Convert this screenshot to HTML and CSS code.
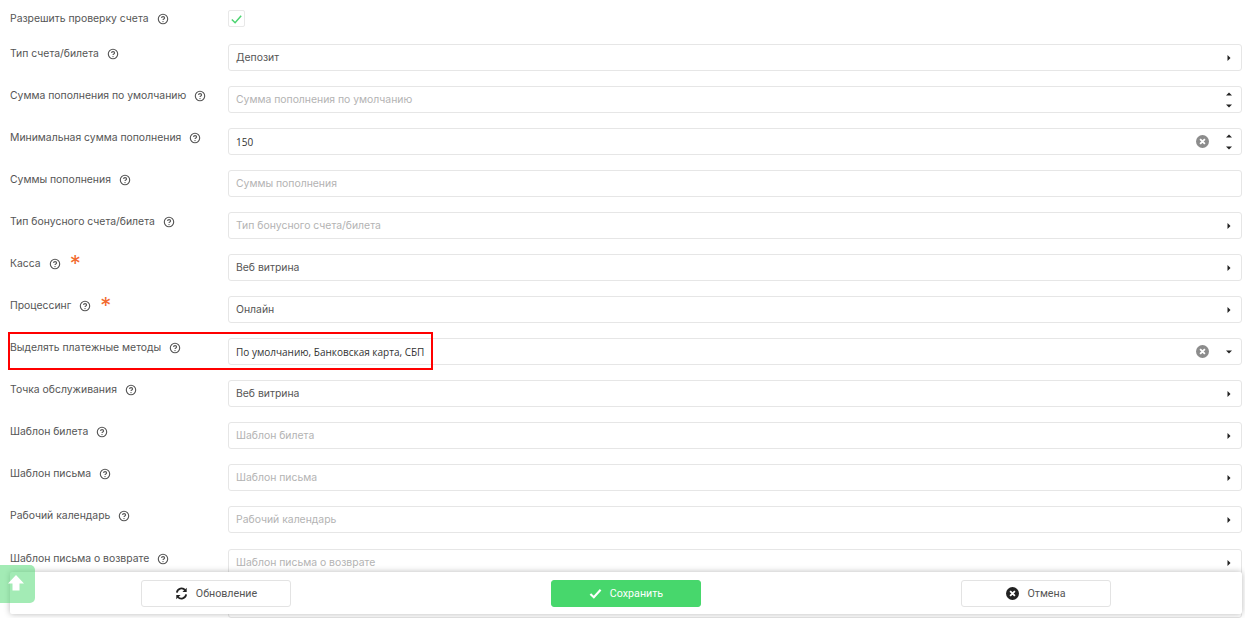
FILE: index.html
```html
<!DOCTYPE html>
<html lang="ru">
<head>
<meta charset="utf-8">
<title>Настройки</title>
<link rel="stylesheet" href="styles.css">
</head>
<body>
<svg class="defs" width="0" height="0" aria-hidden="true">
  <symbol id="q" viewBox="0 0 12 12">
    <circle cx="6" cy="6" r="4.7" fill="none" stroke="currentColor" stroke-width="1.1"/>
    <path d="M4.5 4.9C4.6 3.2 7.6 3.2 7.6 4.9C7.6 6 6 6 6 7.1" fill="none" stroke="currentColor" stroke-width="1.1"/>
    <circle cx="6" cy="8.6" r=".7" fill="currentColor"/>
  </symbol>
  <symbol id="x" viewBox="0 0 12 12">
    <circle cx="6" cy="6" r="6" fill="currentColor"/>
    <path d="M3.8 3.8L8.2 8.2M8.2 3.8L3.8 8.2" stroke="#fff" stroke-width="1.7"/>
  </symbol>
  <symbol id="r" viewBox="0 0 6 8"><path d="M1.5 1L4.5 4L1.5 7Z" fill="currentColor"/></symbol>
  <symbol id="d" viewBox="0 0 8 6"><path d="M1 1.5H7L4 4.5Z" fill="currentColor"/></symbol>
  <symbol id="u" viewBox="0 0 8 6"><path d="M1 4.5H7L4 1.5Z" fill="currentColor"/></symbol>
</svg>
<main class="form">
  <div class="row row-check">
    <div class="label"><span>Разрешить проверку счета</span><svg class="help"><use href="#q"/></svg></div>
    <div class="check"><svg viewBox="0 0 16 16" width="16" height="16"><path d="M3 8.5L6.5 12L13 4.5" fill="none" stroke="#4cd471" stroke-width="1.6"/></svg></div>
  </div>
  <div class="row">
    <div class="label"><span>Тип счета/билета</span><svg class="help"><use href="#q"/></svg></div>
    <div class="field"><span class="value">Депозит</span><svg class="arrow"><use href="#r"/></svg></div>
  </div>
  <div class="row">
    <div class="label"><span>Сумма пополнения по умолчанию</span><svg class="help"><use href="#q"/></svg></div>
    <div class="field"><span class="ph">Сумма пополнения по умолчанию</span><div class="spin"><svg><use href="#u"/></svg><svg><use href="#d"/></svg></div></div>
  </div>
  <div class="row">
    <div class="label"><span>Минимальная сумма пополнения</span><svg class="help"><use href="#q"/></svg></div>
    <div class="field"><span class="value dark">150</span><svg class="clear"><use href="#x"/></svg><div class="spin"><svg><use href="#u"/></svg><svg><use href="#d"/></svg></div></div>
  </div>
  <div class="row">
    <div class="label"><span>Суммы пополнения</span><svg class="help"><use href="#q"/></svg></div>
    <div class="field"><span class="ph">Суммы пополнения</span></div>
  </div>
  <div class="row">
    <div class="label"><span>Тип бонусного счета/билета</span><svg class="help"><use href="#q"/></svg></div>
    <div class="field"><span class="ph">Тип бонусного счета/билета</span><svg class="arrow"><use href="#r"/></svg></div>
  </div>
  <div class="row">
    <div class="label"><span>Касса</span><svg class="help"><use href="#q"/></svg><span class="req">*</span></div>
    <div class="field"><span class="value">Веб витрина</span><svg class="arrow"><use href="#r"/></svg></div>
  </div>
  <div class="row">
    <div class="label"><span>Процессинг</span><svg class="help"><use href="#q"/></svg><span class="req">*</span></div>
    <div class="field"><span class="value">Онлайн</span><svg class="arrow"><use href="#r"/></svg></div>
  </div>
  <div class="row">
    <div class="label"><span>Выделять платежные методы</span><svg class="help"><use href="#q"/></svg></div>
    <div class="field"><span class="value dark">По умолчанию, Банковская карта, СБП</span><svg class="clear"><use href="#x"/></svg><svg class="arrow-d"><use href="#d"/></svg></div>
  </div>
  <div class="row">
    <div class="label"><span>Точка обслуживания</span><svg class="help"><use href="#q"/></svg></div>
    <div class="field"><span class="value">Веб витрина</span><svg class="arrow"><use href="#r"/></svg></div>
  </div>
  <div class="row">
    <div class="label"><span>Шаблон билета</span><svg class="help"><use href="#q"/></svg></div>
    <div class="field"><span class="ph">Шаблон билета</span><svg class="arrow"><use href="#r"/></svg></div>
  </div>
  <div class="row">
    <div class="label"><span>Шаблон письма</span><svg class="help"><use href="#q"/></svg></div>
    <div class="field"><span class="ph">Шаблон письма</span><svg class="arrow"><use href="#r"/></svg></div>
  </div>
  <div class="row">
    <div class="label"><span>Рабочий календарь</span><svg class="help"><use href="#q"/></svg></div>
    <div class="field"><span class="ph">Рабочий календарь</span><svg class="arrow"><use href="#r"/></svg></div>
  </div>
  <div class="row row-low">
    <div class="label"><span>Шаблон письма о возврате</span><svg class="help"><use href="#q"/></svg></div>
    <div class="field"><span class="ph">Шаблон письма о возврате</span><svg class="arrow"><use href="#r"/></svg></div>
  </div>
  <div class="row">
    <div class="label"></div>
    <div class="field"></div>
  </div>
</main>
<div class="highlight"></div>
<footer class="bar">
  <button class="btn">
    <svg viewBox="0 0 14 14" width="13" height="13"><path d="M2 6A5 5 0 0 1 11 3.6M12 8A5 5 0 0 1 3 10.4" fill="none" stroke="#222" stroke-width="1.9"/><path d="M12.6 .8V5.4H8ZM1.4 13.2V8.6H6Z" fill="#222"/></svg>
    <span>Обновление</span>
  </button>
  <button class="btn btn-save">
    <svg viewBox="0 0 14 14" width="13" height="13"><path d="M1.5 7.5L5.2 11L12.5 3" fill="none" stroke="#fff" stroke-width="2.3"/></svg>
    <span>Сохранить</span>
  </button>
  <button class="btn">
    <svg class="cancel-icon"><use href="#x"/></svg>
    <span>Отмена</span>
  </button>
</footer>
<div class="up"><svg viewBox="0 0 18 18" width="18" height="18"><path d="M9 1L17 9.5H12.5V16.5H5.5V9.5H1Z" fill="#fff"/></svg></div>
</body>
</html>
```
FILE: styles.css
```css
* { box-sizing: border-box; }
html, body { height: 100%; }
body {
  margin: 0;
  background: #fff;
  overflow: hidden;
  font-family: "Inter", "Open Sans", sans-serif;
  font-size: 10.4px;
  color: #555;
  position: relative;
}
.defs { position: absolute; }
.form {
  padding: 2px 3px 0 10px;
  display: flex;
  flex-direction: column;
  gap: 15px;
}
.row {
  display: grid;
  grid-template-columns: 218px 1fr;
  height: 27px;
}
.row-low { margin-top: 1px; }
.row-check .label { margin-top: 8px; }
.label {
  display: flex;
  align-items: center;
  height: 18px;
  margin-top: 1px;
  color: #555;
  line-height: 18px;
}
.help {
  width: 12px;
  height: 12px;
  margin-left: 8px;
  color: #555;
  flex: none;
}
.req {
  color: #f26a2e;
  font-size: 22px;
  margin-left: 9px;
  line-height: 18px;
  height: 18px;
  margin-top: -3px;
}
.check {
  width: 17px;
  height: 17px;
  margin-top: 8px;
  border: 1px solid #e8e8e8;
  border-radius: 2px;
  display: flex;
  align-items: center;
  justify-content: center;
}
.field {
  display: flex;
  align-items: center;
  height: 27px;
  padding: 0 7px;
  background: #fff;
  border: 1px solid #e6e6e6;
  border-radius: 3px;
}
.value { color: #555; flex: 1; }
.value.dark {
  color: #333;
  font-family: "Open Sans", sans-serif;
  font-size: 10px;
}
.ph { color: #b3b3b3; flex: 1; }
.arrow { width: 6px; height: 8px; color: #222; margin-right: 2px; }
.arrow-d { width: 8px; height: 6px; color: #222; margin-right: 1px; margin-left: 16px; }
.clear { width: 13px; height: 13px; color: #8c8c8c; }
.spin {
  display: flex;
  flex-direction: column;
  gap: 6px;
  margin-left: 16px;
  margin-right: 1px;
  color: #222;
}
.spin svg { display: block; width: 8px; height: 6px; color: #222; }
.highlight {
  position: absolute;
  left: 8px;
  top: 332px;
  width: 425px;
  height: 38px;
  border: 2px solid #f00;
  pointer-events: none;
}
.bar {
  position: absolute;
  left: 10px;
  top: 572px;
  width: 1232px;
  height: 42px;
  background: #fff;
  box-shadow: 0 0 6px rgba(0, 0, 0, .28);
  border-radius: 2px;
  display: grid;
  grid-template-columns: repeat(3, 150px);
  justify-content: space-between;
  padding: 8px 131px 0 131px;
  align-items: start;
  font-family: "Roboto", sans-serif;
  font-size: 10.7px;
}
.btn {
  width: 150px;
  height: 27px;
  display: flex;
  align-items: center;
  justify-content: center;
  gap: 8px;
  background: #fff;
  border: 1px solid #e3e3e3;
  border-radius: 3px;
  font: inherit;
  color: #555;
}
.btn-save {
  background: #47d76c;
  border-color: #47d76c;
  color: #fff;
}
.cancel-icon { width: 13px; height: 13px; color: #222; }
.up {
  position: absolute;
  left: 0;
  top: 565px;
  width: 35px;
  height: 38px;
  background: rgba(71, 215, 108, .5);
  border-radius: 0 5px 5px 0;
  display: flex;
  align-items: center;
  justify-content: center;
  padding-right: 3px;
  padding-bottom: 3px;
}
```
